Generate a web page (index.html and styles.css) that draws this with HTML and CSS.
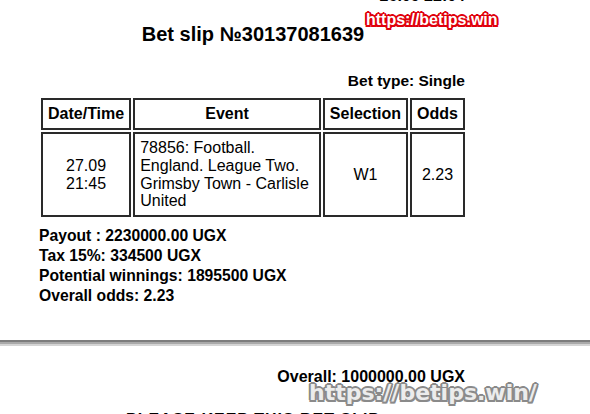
FILE: index.html
```html
<!DOCTYPE html>
<html lang="en">
<head>
    <meta charset="UTF-8">
    <meta name="viewport" content="width=device-width, initial-scale=1.0">
    <title>Bet slip</title>
    <link rel="stylesheet" href="styles.css">
</head>
<body>
    <!-- first sheet -->
    <div class="sheet">
        <div class="slip">
            <div class="stamp">26.09 22:04</div>
            <h1 class="title">Bet slip №30137081639</h1>
            <div class="bet-type">Bet type: Single</div>

            <table class="bets">
                <thead>
                    <tr>
                        <th class="col-date">Date/Time</th>
                        <th class="col-event">Event</th>
                        <th class="col-sel">Selection</th>
                        <th class="col-odds">Odds</th>
                    </tr>
                </thead>
                <tbody>
                    <tr>
                        <td>27.09<br>21:45</td>
                        <td class="event">78856: Football. England. League Two. Grimsby Town - Carlisle United</td>
                        <td>W1</td>
                        <td>2.23</td>
                    </tr>
                </tbody>
            </table>

            <div class="totals">
                <div>Payout : 2230000.00 UGX</div>
                <div>Tax 15%: 334500 UGX</div>
                <div>Potential winnings: 1895500 UGX</div>
                <div>Overall odds: 2.23</div>
            </div>
        </div>
    </div>

    <div class="page-break"></div>

    <!-- second sheet -->
    <div class="sheet">
        <div class="slip">
            <div class="overall">Overall: 1000000.00 UGX</div>
            <div class="note">PLEASE KEEP THIS BET SLIP</div>
        </div>
    </div>

    <div class="mark mark-red">https://betips.win</div>
    <div class="mark mark-grey">https://betips.win/</div>
</body>
</html>
```

FILE: styles.css
```css
body {
    margin: 0;
    font-family: "Liberation Sans", Arial, sans-serif;
    color: #000;
    background: #fff;
    overflow: hidden;
}

.sheet {
    background: #fff;
}

.slip {
    width: 424px;
    margin-left: 41px;
}

.stamp {
    margin-top: -13px;
    text-align: right;
    font-weight: bold;
    font-size: 16px;
    line-height: 18px;
}

.title {
    margin: 18px 0 0;
    text-align: center;
    font-size: 20px;
    line-height: 23px;
}

.bet-type {
    margin-top: 26px;
    text-align: right;
    font-weight: bold;
    font-size: 15.5px;
    line-height: 18px;
}

.bets {
    margin: 6px 0 0 -2px;
    width: 428px;
    border-collapse: separate;
    border-spacing: 2px;
    font-size: 16px;
}

.bets th, .bets td {
    box-sizing: border-box;
    border: 2px solid #2a2a2a;
    padding: 5px;
    text-align: center;
    vertical-align: middle;
}

.bets th {
    line-height: 18px;
}

.bets td {
    line-height: 17.75px;
}

.bets td.event {
    text-align: left;
}

.col-date { width: 89px; }
.col-event { width: 189px; }
.col-sel { width: 85px; }
.col-odds { width: 55px; }

.totals {
    margin: 7px 0 0 -2px;
    font-weight: bold;
    font-size: 15.7px;
    line-height: 20px;
}

.page-break {
    margin-top: 34px;
    height: 2px;
    border-top: 2px solid #7d7d7d;
    border-bottom: 2px solid #d4d4d4;
    background: #a9a9a9;
}

.overall {
    margin-top: 22px;
    text-align: right;
    font-weight: bold;
    font-size: 16px;
    line-height: 18px;
}

.note {
    margin-top: 25px;
    text-align: center;
    font-weight: bold;
    font-size: 16px;
    line-height: 18px;
    letter-spacing: 1px;
}

/* watermarks over the slip */
.mark {
    position: absolute;
    font-weight: bold;
    white-space: nowrap;
}

.mark-red {
    left: 366px;
    top: 12px;
    font-size: 16px;
    line-height: 16px;
    color: #fff;
    text-shadow:
        2px 0 0 #e0000b, -2px 0 0 #e0000b, 0 2px 0 #e0000b, 0 -2px 0 #e0000b,
        1.5px 1.5px 0 #e0000b, -1.5px 1.5px 0 #e0000b, 1.5px -1.5px 0 #e0000b, -1.5px -1.5px 0 #e0000b;
}

.mark-grey {
    left: 309px;
    top: 382px;
    font-family: "DejaVu Sans", sans-serif;
    font-size: 22px;
    line-height: 22px;
    color: #ececec;
    text-shadow:
        2px 0 0 #8a8a8a, -2px 0 0 #8a8a8a, 0 2px 0 #8a8a8a, 0 -2px 0 #8a8a8a,
        1.5px 1.5px 0 #8a8a8a, -1.5px 1.5px 0 #8a8a8a, 1.5px -1.5px 0 #8a8a8a, -1.5px -1.5px 0 #8a8a8a;
}
```
